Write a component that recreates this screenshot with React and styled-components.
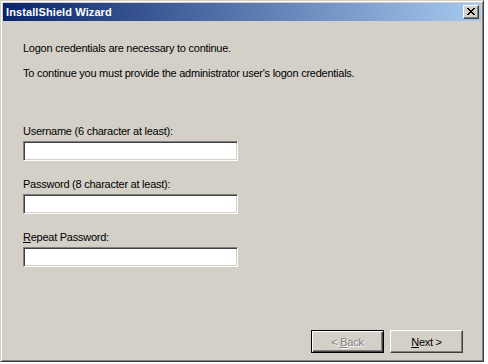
import styled, { createGlobalStyle } from "styled-components";

const GlobalStyle = createGlobalStyle`
  html, body {
    margin: 0;
    padding: 0;
    background: #ffffff;
  }
  body {
    font-family: "Liberation Sans", Arial, sans-serif;
    font-size: 11px;
  }
`;

const Window = styled.div`
  box-sizing: border-box;
  width: 484px;
  height: 362px;
  padding: 2px;
  background: #d4d0c8;
  border: 1px solid;
  border-color: #d4d0c8 #404040 #404040 #d4d0c8;
  box-shadow: inset 1px 1px #ffffff, inset -1px -1px #808080;
  display: flex;
  flex-direction: column;
`;

const TitleBar = styled.div`
  height: 18px;
  display: flex;
  align-items: center;
  justify-content: space-between;
  padding: 0 2px 0 3px;
  background: linear-gradient(to right, #0a246a, #a6caf0);
`;

const Title = styled.span`
  color: #ffffff;
  font-weight: bold;
  font-size: 11px;
  letter-spacing: 0.1px;
`;

const CloseButton = styled.div`
  box-sizing: border-box;
  width: 16px;
  height: 14px;
  background: #d4d0c8;
  border: 1px solid;
  border-color: #ffffff #404040 #404040 #ffffff;
  box-shadow: inset -1px -1px #808080;
  display: flex;
  align-items: center;
  justify-content: center;
  padding-bottom: 1px;
`;

const Body = styled.div`
  flex: 1;
  display: flex;
  flex-direction: column;
  padding: 21px 18px 6px 20px;
  color: #000000;
  letter-spacing: -0.25px;
`;

const Text = styled.p`
  margin: 0 0 12px 0;
  line-height: 13px;
`;

const Fields = styled.div`
  display: flex;
  flex-direction: column;
  gap: 17px;
  margin-top: 33px;
`;

const Field = styled.label`
  display: flex;
  flex-direction: column;
  gap: 3px;
  line-height: 13px;
`;

const Input = styled.input`
  box-sizing: border-box;
  width: 215px;
  height: 20px;
  margin: 0;
  padding: 1px 3px;
  background: #ffffff;
  font-family: inherit;
  font-size: 11px;
  border: 1px solid;
  border-color: #808080 #ffffff #ffffff #808080;
  box-shadow: inset 1px 1px #404040, inset -1px -1px #d4d0c8;
  outline: none;
`;

const Footer = styled.div`
  margin-top: auto;
  display: flex;
  justify-content: flex-end;
  gap: 6px;
`;

const Button = styled.button`
  box-sizing: border-box;
  width: 73px;
  height: 23px;
  margin: 0;
  padding: 0;
  background: #d4d0c8;
  font-family: inherit;
  font-size: 11px;
  letter-spacing: -0.25px;
  color: ${(p) => (p.disabled ? "#808080" : "#000000")};
  text-shadow: ${(p) => (p.disabled ? "1px 1px #ffffff" : "none")};
  border: 1px solid;
  border-color: ${(p) =>
    p.$default ? "#000000" : "#ffffff #404040 #404040 #ffffff"};
  box-shadow: ${(p) =>
    p.$default
      ? "inset 1px 1px #ffffff, inset -1px -1px #404040, inset -2px -2px #808080"
      : "inset -1px -1px #808080"};
`;

const Key = styled.span`
  text-decoration: underline;
`;

export default function App() {
  return (
    <>
      <GlobalStyle />
      <Window>
        <TitleBar>
          <Title>InstallShield Wizard</Title>
          <CloseButton>
            <svg width="8" height="7" viewBox="0 0 8 7" shapeRendering="crispEdges">
              <path d="M0 0h2v1h-2zM6 0h2v1h-2zM1 1h2v1h-2zM5 1h2v1h-2zM2 2h4v1h-4zM3 3h2v1h-2zM2 4h4v1h-4zM1 5h2v1h-2zM5 5h2v1h-2zM0 6h2v1h-2zM6 6h2v1h-2z" fill="#000" />
            </svg>
          </CloseButton>
        </TitleBar>
        <Body>
          <Text>Logon credentials are necessary to continue.</Text>
          <Text>To continue you must provide the administrator user's logon credentials.</Text>
          <Fields>
            <Field>
              Username (6 character at least):
              <Input type="text" />
            </Field>
            <Field>
              Password (8 character at least):
              <Input type="password" />
            </Field>
            <Field>
              <span><Key>R</Key>epeat Password:</span>
              <Input type="password" />
            </Field>
          </Fields>
          <Footer>
            <Button disabled $default>
              &lt; <Key>B</Key>ack
            </Button>
            <Button>
              <Key>N</Key>ext &gt;
            </Button>
          </Footer>
        </Body>
      </Window>
    </>
  );
}
